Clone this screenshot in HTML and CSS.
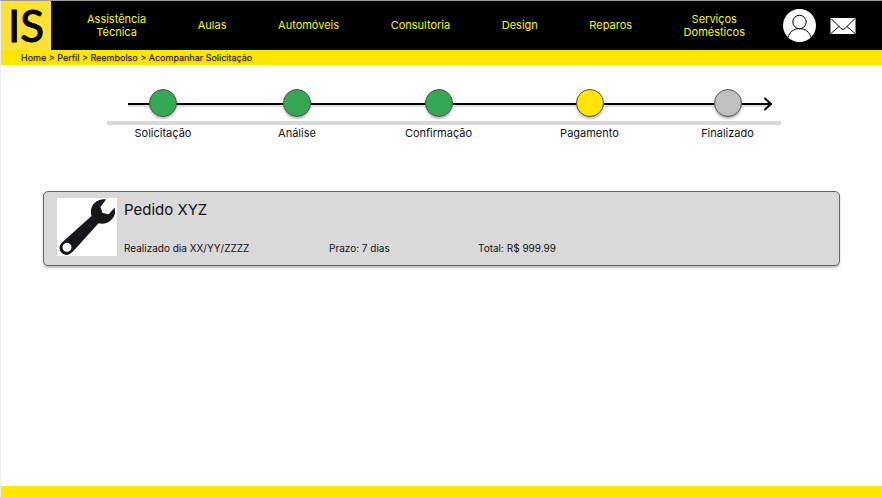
FILE: index.html
```html
<!DOCTYPE html>
<html lang="pt-BR">
<head>
<meta charset="utf-8">
<meta name="viewport" content="width=device-width, initial-scale=1">
<title>Acompanhar Solicitação</title>
<link rel="stylesheet" href="styles.css">
</head>
<body>
<header class="header">
  <a class="logo" href="#">IS</a>
  <nav class="nav" aria-label="Categorias">
    <a href="#">Assistência<br>Técnica</a>
    <a href="#">Aulas</a>
    <a href="#">Automóveis</a>
    <a href="#">Consultoria</a>
    <a href="#">Design</a>
    <a href="#">Reparos</a>
    <a href="#">Serviços<br>Domésticos</a>
  </nav>
  <div class="actions">
    <button class="icon-button" type="button" aria-label="Perfil">
      <svg width="33" height="33" viewBox="0 0 33 33" fill="none" stroke="#000">
        <circle cx="16.500" cy="16.500" r="16.500" fill="#fff" stroke="none"/>
        <circle cx="16.500" cy="13" r="6.700"/>
        <path d="M5 28.500C6.300 23 10.800 19.700 16.500 19.700S26.700 23 28 28.500"/>
      </svg>
    </button>
    <button class="icon-button" type="button" aria-label="Mensagens">
      <svg width="26" height="18" viewBox="0 0 26 18" fill="none" stroke="#000">
        <rect x="0.500" y="1" width="25" height="16" fill="#fff" stroke="none"/>
        <path d="M1 1.500 11 11.500Q13 13.500 15 11.500L25 1.500M1 16.500 9.300 9.200M25 16.500 16.700 9.200"/>
      </svg>
    </button>
  </div>
</header>
<nav class="breadcrumb" aria-label="Trilha">
  <a href="#">Home</a> &gt; <a href="#">Perfil</a> &gt; <a href="#">Reembolso</a> &gt; <a href="#">Acompanhar Solicitação</a>
</nav>
<main class="main">
  <section class="progress" aria-label="Andamento">
    <div class="arrow">
      <svg width="10" height="16" viewBox="0 0 10 16" fill="none" stroke="#000" stroke-width="2" stroke-linecap="round"><path d="M2 2.500 8 8 2 13.500"/></svg>
    </div>
    <ol class="steps">
      <li class="step done">Solicitação</li>
      <li class="step done">Análise</li>
      <li class="step done">Confirmação</li>
      <li class="step current">Pagamento</li>
      <li class="step">Finalizado</li>
    </ol>
  </section>
  <article class="order">
    <svg class="thumb" width="60" height="58" viewBox="0 0 60 58" role="img" aria-label="Chave inglesa">
      <rect width="60" height="58" fill="#fff"/>
      <path fill="#17171b" fill-rule="evenodd" d="M49 1.500C40.500 .3 33 6.500 34 15.500L34.500 18 5 44.500C-1 50.500 5 58.500 12 56.500L16 53.500 41.500 25.300C49 27.500 57 22 58 15L57.800 9.500 51.500 16.300 45.500 15 43.500 9ZM10 44.800a4.500 4.500 0 1 0 .01 0Z"/>
    </svg>
    <div class="order-body">
      <h1>Pedido XYZ</h1>
      <div class="details">
        <span>Realizado dia XX/YY/ZZZZ</span>
        <span>Prazo: 7 dias</span>
        <span>Total: R$ 999.99</span>
      </div>
    </div>
  </article>
</main>
<footer class="footer"></footer>
</body>
</html>
```
FILE: styles.css
```css
*,
*::before {
  box-sizing: border-box;
}

body {
  display: flex;
  flex-direction: column;
  min-height: 100vh;
  margin: 0;
  border-top: 1px solid #999;
  border-left: 1px solid #eee;
  background: #fff;
  color: #111;
  font-family: Inter, "Liberation Sans", sans-serif;
  font-size: 11px;
  line-height: 13px;
}

a {
  color: inherit;
  text-decoration: none;
}

.header {
  display: flex;
  align-items: center;
  height: 49px;
  padding-right: 26px;
  background: #000;
}

.logo {
  flex: none;
  width: 50px;
  height: 49px;
  background: #ffe135;
  color: #000;
  font-family: Lato, "Open Sans", sans-serif;
  font-size: 44px;
  line-height: 49px;
  text-align: center;
  -webkit-text-stroke: 1px #000;
}

.nav {
  display: flex;
  flex: 1;
  align-items: center;
  justify-content: space-between;
  margin: 0 38px 0 36px;
  color: #f5f50a;
  text-align: center;
}

.actions {
  display: flex;
  align-items: center;
  gap: 14px;
}

.icon-button {
  display: flex;
  padding: 0;
  border: 0;
  background: none;
  cursor: pointer;
}

.breadcrumb {
  padding: 0 20px;
  background: #ffe500;
  font-size: 9px;
  line-height: 15px;
  text-shadow: 0 1px 2px rgb(0 0 0 / 25%);
}

.main {
  flex: 1;
  padding: 24px 42px;
}

.progress {
  position: relative;
  margin: 0 51px 0 53px;
}

.arrow {
  position: absolute;
  top: 14px;
  left: 32px;
  right: 17px;
  height: 2px;
  background: #000;
  box-shadow: 0 2px 1px rgb(0 0 0 / 15%);
}

.arrow svg {
  position: absolute;
  top: -7px;
  right: -1px;
}

.steps {
  position: relative;
  display: grid;
  grid-template-columns: 134fr 134fr 149fr 153fr 123fr;
  margin: 0;
  padding: 0;
  list-style: none;
}

.steps::before {
  content: "";
  position: absolute;
  top: 32px;
  left: 11px;
  right: 8px;
  height: 4px;
  background: #d9d9d9;
}

.step {
  display: flex;
  flex-direction: column;
  align-items: center;
  gap: 10px;
}

.step::before {
  content: "";
  width: 28px;
  height: 28px;
  border: 1px solid #555;
  border-radius: 50%;
  background: #c0c0c0;
  box-shadow: 0 2px 2px rgb(0 0 0 / 25%);
}

.step.done::before {
  background: #34a853;
}

.step.current::before {
  background: #ffe500;
}

.order {
  display: flex;
  gap: 7px;
  margin-top: 51px;
  padding: 6px 13px 9px;
  border: 1px solid #666;
  border-radius: 5px;
  background: #d9d9d9;
  box-shadow: 0 2px 2px rgb(0 0 0 / 25%);
}

.thumb {
  flex: none;
}

.order-body {
  display: flex;
  flex: 1;
  flex-direction: column;
  justify-content: space-between;
}

h1 {
  margin: 0;
  font-size: 15px;
  font-weight: 400;
  line-height: 24px;
}

.details {
  display: grid;
  grid-template-columns: 205fr 149fr 348fr;
  font-size: 10px;
  line-height: 16px;
}

.footer {
  height: 11px;
  background: #ffe500;
}
```
